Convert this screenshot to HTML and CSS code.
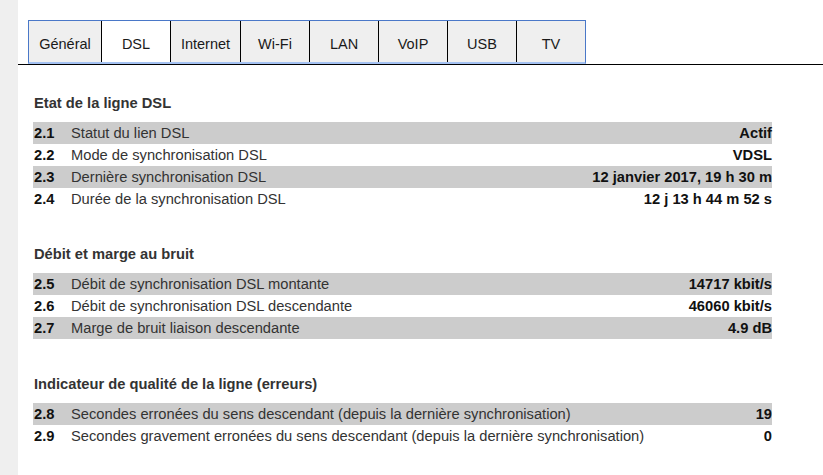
FILE: index.html
```html
<!DOCTYPE html>
<html lang="fr">
<head>
<meta charset="utf-8">
<title>DSL</title>
<link rel="stylesheet" href="styles.css">
</head>
<body>
<div class="page">
  <div class="side"></div>
  <div class="main">
    <div class="tabbar">
      <div class="tabs">
        <div class="tab first">Général</div>
        <div class="tab active">DSL</div>
        <div class="tab wide">Internet</div>
        <div class="tab">Wi-Fi</div>
        <div class="tab">LAN</div>
        <div class="tab">VoIP</div>
        <div class="tab">USB</div>
        <div class="tab">TV</div>
      </div>
    </div>
    <div class="content">
      <div class="section s1">
        <h2 class="heading">Etat de la ligne DSL</h2>
        <div class="row odd"><span class="num">2.1</span><span class="label">Statut du lien DSL</span><span class="value">Actif</span></div>
        <div class="row"><span class="num">2.2</span><span class="label">Mode de synchronisation DSL</span><span class="value">VDSL</span></div>
        <div class="row odd"><span class="num">2.3</span><span class="label">Dernière synchronisation DSL</span><span class="value">12 janvier 2017, 19 h 30 m</span></div>
        <div class="row"><span class="num">2.4</span><span class="label">Durée de la synchronisation DSL</span><span class="value">12 j 13 h 44 m 52 s</span></div>
      </div>
      <div class="section s2">
        <h2 class="heading">Débit et marge au bruit</h2>
        <div class="row odd"><span class="num">2.5</span><span class="label">Débit de synchronisation DSL montante</span><span class="value">14717 kbit/s</span></div>
        <div class="row"><span class="num">2.6</span><span class="label">Débit de synchronisation DSL descendante</span><span class="value">46060 kbit/s</span></div>
        <div class="row odd"><span class="num">2.7</span><span class="label">Marge de bruit liaison descendante</span><span class="value">4.9 dB</span></div>
      </div>
      <div class="section s3">
        <h2 class="heading">Indicateur de qualité de la ligne (erreurs)</h2>
        <div class="row odd"><span class="num">2.8</span><span class="label">Secondes erronées du sens descendant (depuis la dernière synchronisation)</span><span class="value">19</span></div>
        <div class="row"><span class="num">2.9</span><span class="label">Secondes gravement erronées du sens descendant (depuis la dernière synchronisation)</span><span class="value">0</span></div>
      </div>
    </div>
  </div>
</div>
</body>
</html>
```
FILE: styles.css
```css
html, body {
  margin: 0;
  padding: 0;
  background: #ffffff;
  font-family: "Liberation Sans", Arial, sans-serif;
}

.page {
  display: flex;
  min-height: 475px;
}

.side {
  width: 18px;
  flex: none;
  background: #efefef;
}

.main {
  flex: 1;
  padding-top: 20px;
}

.tabbar {
  border-bottom: 1px solid #000000;
  padding-left: 10px;
}

.tabs {
  display: flex;
  width: max-content;
  border: 1px solid #4a78c8;
  border-bottom: 2px solid #a3c1f2;
}

.tab {
  width: 69px;
  height: 41px;
  box-sizing: border-box;
  padding-top: 15px;
  text-align: center;
  font-size: 14.5px;
  line-height: 16px;
  color: #1a1a1a;
  background: #efefef;
  border-left: 1px solid #000000;
}

.tab.first {
  width: 72px;
  border-left: none;
}

.tab.wide {
  width: 70px;
}

.tab.active {
  background: #ffffff;
}

.content {
  padding-left: 15px;
  width: 739px;
}

.section.s1 {
  margin-top: 30px;
}

.section.s2 {
  margin-top: 36px;
}

.section.s3 {
  margin-top: 37px;
}

.heading {
  margin: 0 0 10px 0;
  padding-left: 1px;
  font-size: 14.7px;
  line-height: 17px;
  font-weight: bold;
  color: #333333;
}

.row {
  display: flex;
  height: 22px;
  line-height: 22px;
  font-size: 14.7px;
}

.row.odd {
  background: #cccccc;
}

.num {
  width: 38px;
  flex: none;
  padding-left: 1px;
  box-sizing: border-box;
  font-weight: bold;
  color: #111111;
}

.label {
  flex: 1;
  color: #333333;
}

.value {
  font-weight: bold;
  color: #111111;
  text-align: right;
}
```
